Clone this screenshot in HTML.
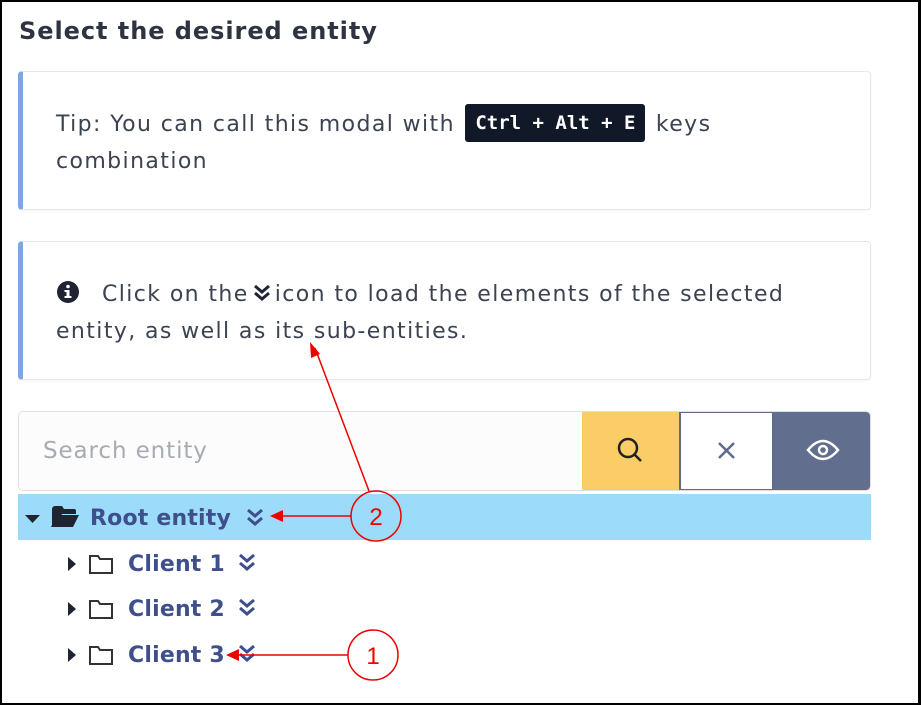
<!DOCTYPE html>
<html><head><style>
*{margin:0;padding:0;box-sizing:border-box}
body{width:921px;height:705px;background:#fff;position:relative;overflow:hidden;font-family:"DejaVu Sans",sans-serif}
.frame{position:absolute;left:0;top:0;width:921px;height:705px;border:2px solid #000;border-right-width:3px}
.t{position:absolute;left:19px;top:17px;font-size:24px;font-weight:bold;color:#2d3340;letter-spacing:0.95px}
.box{position:absolute;left:18px;width:853px;border:1px solid #e5e7eb;border-left:5px solid #7ea6e0;border-radius:4px;background:#fff;box-shadow:0 1px 2px rgba(0,0,0,.05)}
.box p{position:absolute;left:33px;font-size:22px;color:#3b4250;line-height:37px;letter-spacing:1.4px;white-space:nowrap}
kbd{display:inline-block;background:#111827;color:#fff;font-family:"DejaVu Sans Mono",monospace;font-weight:bold;font-size:19px;letter-spacing:0;padding:0 10px;height:38px;line-height:38px;border-radius:3px;vertical-align:middle;margin:-4px 2px 0 2px}
.search{position:absolute;left:18px;top:411px;width:853px;height:80px;border:1px solid #e0e0e0;border-radius:5px;background:#fcfcfc;overflow:hidden}
.search span{position:absolute;left:24px;top:26px;font-size:23px;color:#a7abb2;letter-spacing:0.9px}
.b{position:absolute;top:-1px;height:80px}
.row{position:absolute;left:18px;width:853px;height:46px}
.lbl{position:absolute;font-size:22px;font-weight:bold;color:#3e4f8c;letter-spacing:0.2px}
</style></head><body>
<div class="t">Select the desired entity</div>
<div class="box" style="top:71px;height:139px"><p style="top:34px">Tip: You can call this modal with <kbd>Ctrl + Alt + E</kbd> keys<br>combination</p></div>
<div class="box" style="top:241px;height:139px"><p style="top:34px"><svg width="24" height="24" viewBox="0 0 24 24" style="vertical-align:-3px;margin-right:22px"><circle cx="12" cy="12" r="11" fill="#1f2433"/><rect x="10.5" y="10" width="3" height="8" fill="#fff"/><rect x="8.5" y="16" width="7" height="2" fill="#fff"/><rect x="8.5" y="10" width="5" height="2" fill="#fff"/><circle cx="12" cy="6.5" r="1.8" fill="#fff"/></svg>Click on the<svg width="22" height="20" viewBox="0 0 22 20" style="vertical-align:-2px;margin:0 2px"><path d="M4 3l7 6 7-6M4 10l7 6 7-6" stroke="#1f2433" stroke-width="3" fill="none"/></svg>icon to load the elements of the selected<br>entity, as well as its sub-entities.</p></div>
<div class="search"><span>Search entity</span>
<div class="b" style="left:563px;width:97px;background:#fbcd67"><svg width="97" height="80"><circle cx="46" cy="37" r="9" stroke="#222" stroke-width="2.5" fill="none"/><path d="M52 43l7 7" stroke="#222" stroke-width="2.5"/></svg></div>
<div class="b" style="left:660px;width:95px;background:#fff;border:2px solid #5f6b8c"><svg width="91" height="76"><path d="M38 30l15 15M53 30l-15 15" stroke="#5f6b8c" stroke-width="2.5"/></svg></div>
<div class="b" style="left:755px;width:98px;background:#626e8e"><svg width="98" height="80"><path d="M34 39q15-18 30 0q-15 18-30 0z" stroke="#fff" stroke-width="2.5" fill="none"/><circle cx="49" cy="39" r="4" stroke="#fff" stroke-width="2.5" fill="none"/></svg></div>
</div>
<div class="row" style="top:494px;background:#9cdcfa"></div>
<svg style="position:absolute;left:0;top:494px" width="300" height="190">
<path d="M25 21h15l-7.5 8z" fill="#1f2433"/>
<path d="M52 16q0-4 3-4h7l2 3h10q2 0 2 2v3h-14l-7 13h-3z" fill="#1f2433"/><path d="M57 21h22l-6 12h-22z" fill="#1f2433"/>
<g stroke="#3e4f8c" stroke-width="3" fill="none"><path d="M248 16l7 6 7-6M248 24l7 6 7-6"/><path d="M240 61l7 6 7-6M240 69l7 6 7-6"/><path d="M240 106l7 6 7-6M240 114l7 6 7-6"/><path d="M240 152l7 6 7-6M240 160l7 6 7-6"/></g>
<g fill="#1f2433"><path d="M68 63v14l8-7z"/><path d="M68 108v14l8-7z"/><path d="M68 154v14l8-7z"/></g>
<g stroke="#333" stroke-width="2" fill="none"><path d="M90 62h8l2 3h12v14h-22z"/><path d="M90 107h8l2 3h12v14h-22z"/><path d="M90 153h8l2 3h12v14h-22z"/></g>
</svg>
<div class="lbl" style="left:90px;top:506px">Root entity</div>
<div class="lbl" style="left:128px;top:552px">Client 1</div>
<div class="lbl" style="left:128px;top:597px">Client 2</div>
<div class="lbl" style="left:128px;top:643px">Client 3</div>
<svg style="position:absolute;left:0;top:0" width="921" height="705">
<g stroke="#e00" stroke-width="1.5" fill="none"><circle cx="376" cy="516" r="25"/><circle cx="373" cy="655" r="25"/><path d="M369 491L315 348M351 516H280M348 655H236"/></g>
<g fill="#e00"><path d="M310 342l1 16 9-4z"/><path d="M270 516l13-6v12z"/><path d="M226 655l13-6v12z"/></g>
<text x="376" y="525" font-size="24" fill="#e00" text-anchor="middle" font-family="Liberation Sans">2</text>
<text x="373" y="664" font-size="24" fill="#e00" text-anchor="middle" font-family="Liberation Sans">1</text>
</svg>
<div class="frame"></div>
</body></html>
